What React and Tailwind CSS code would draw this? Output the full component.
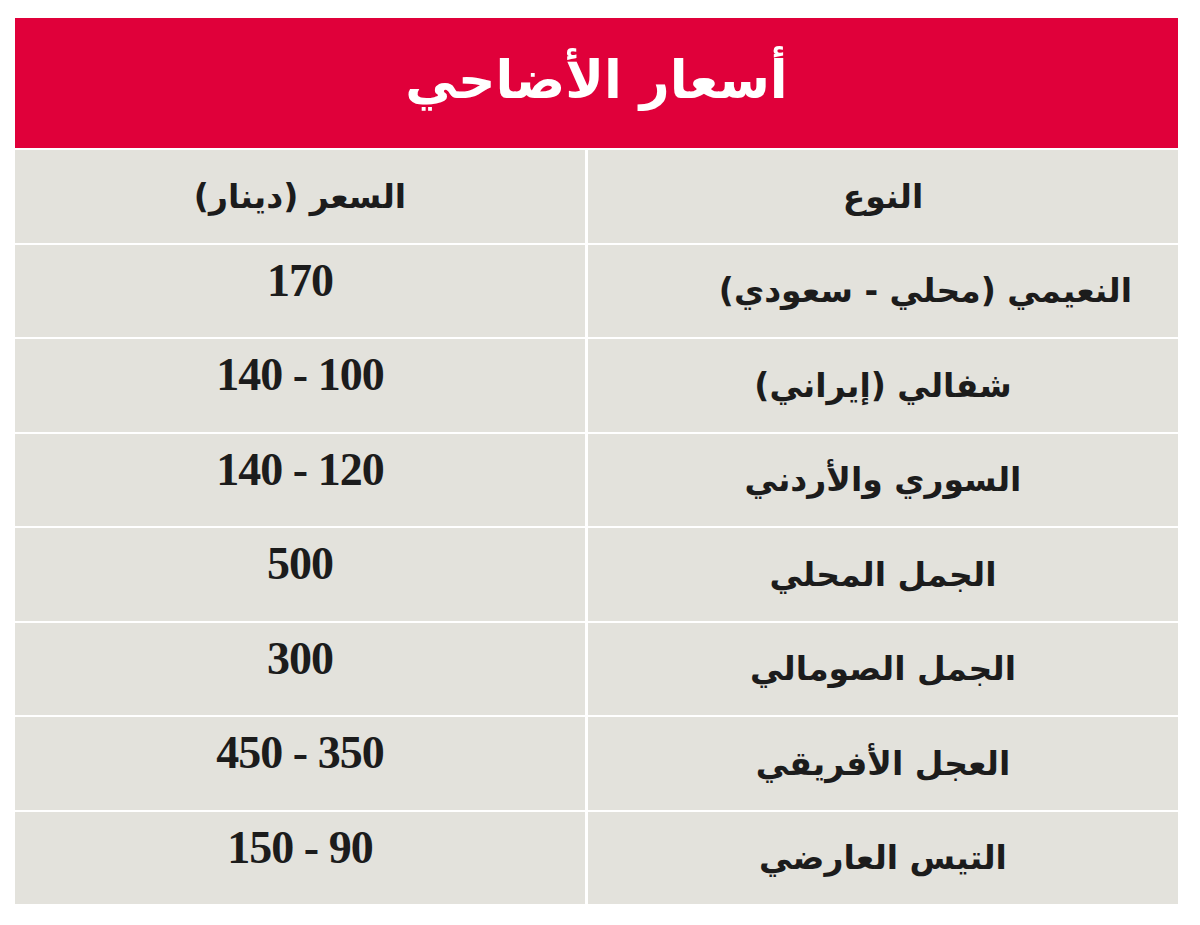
import React from 'react';

// prices are written in the order they appear on screen, left to right
const rows = [
    { type: 'النعيمي (محلي - سعودي)', price: '170', shift: true },
    { type: 'شفالي (إيراني)', price: '140 - 100' },
    { type: 'السوري والأردني', price: '140 - 120' },
    { type: 'الجمل المحلي', price: '500' },
    { type: 'الجمل الصومالي', price: '300' },
    { type: 'العجل الأفريقي', price: '450 - 350' },
    { type: 'التيس العارضي', price: '150 - 90' },
];

const arabic = "font-['DejaVu_Sans',sans-serif] font-bold";
const cell = 'h-[92.5px] bg-[#e3e2dc] flex items-center';

export default function App() {
    return (
        <div className="w-[1200px] h-[925px] bg-white pt-[18px] pl-[15px]">
            <div dir="rtl" className="w-[1163px] flex flex-col gap-[2px]">
                <div className="h-[130px] bg-[#e0003a] flex items-center justify-center">
                    <h1 className={`${arabic} text-[52px] text-white leading-none pb-[6px]`}>أسعار الأضاحي</h1>
                </div>
                <div className="grid grid-cols-[590px_570px] gap-x-[3px] gap-y-[2px]">
                    <div className={`${cell} justify-center ${arabic} text-[33px] text-[#1c1c1c]`}>النوع</div>
                    <div className={`${cell} justify-center ${arabic} text-[33px] text-[#1c1c1c]`}>السعر (دينار)</div>
                    {rows.map((r) => (
                        <React.Fragment key={r.type}>
                            <div className={`${cell} ${r.shift ? 'justify-start pr-[46px]' : 'justify-center'} ${arabic} text-[33px] text-[#1c1c1c]`}>
                                {r.type}
                            </div>
                            <div className={`${cell} justify-center pb-[20px]`}>
                                <span dir="ltr" className="font-['Liberation_Serif',serif] font-bold text-[46px] text-[#1c1c1c] leading-none tracking-[-1px]">
                                    {r.price}
                                </span>
                            </div>
                        </React.Fragment>
                    ))}
                </div>
            </div>
        </div>
    );
}
